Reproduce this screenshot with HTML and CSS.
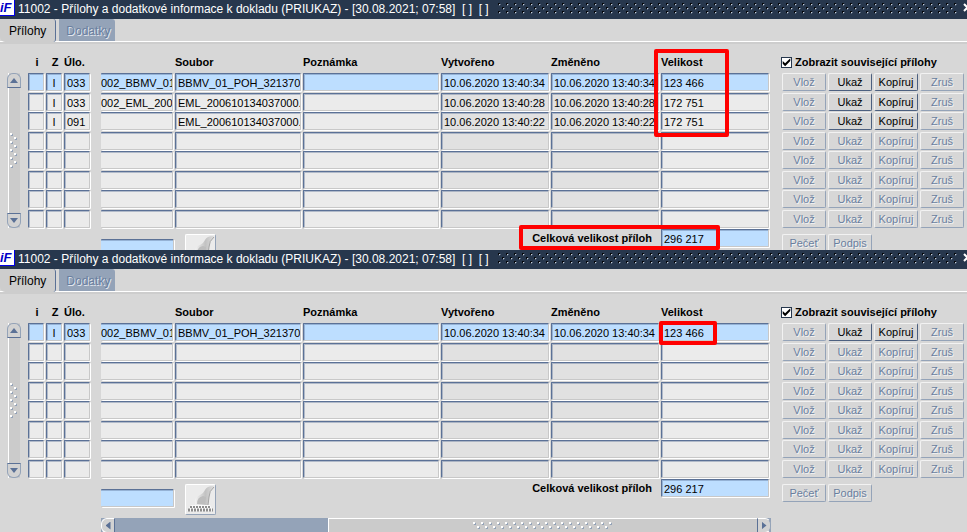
FILE: index.html
```html
<!DOCTYPE html>
<html lang="cs">
<head>
    <meta charset="UTF-8" />
    <meta name="viewport" content="width=device-width, initial-scale=1.0" />
    <title>Přílohy a dodatkové informace k dokladu</title>
    <link rel="stylesheet" href="styles.css">
</head>
<body>
    <!-- Shared patterns and icons -->
    <svg class="defs" aria-hidden="true">
        <defs>
            <pattern id="gripDark" width="8" height="8" patternUnits="userSpaceOnUse">
                <path d="M1 0h2v1h-1v1h-1z M5 4h2v1h-1v1h-1z" fill="#05080d" />
                <path d="M2 1h1v1h-1z M6 5h1v1h-1z" fill="#c3ccd8" />
                <path d="M3 1h1v1h-1z M2 2h1v1h-1z M7 5h1v1h-1z M6 6h1v1h-1z" fill="#5d6b80" />
            </pattern>
            <pattern id="gripLight" width="8" height="8" patternUnits="userSpaceOnUse">
                <path d="M1 1h2v2h-2z M5 5h2v2h-2z" fill="#94a3b8" />
                <path d="M0 0h2v2h-2z M4 4h2v2h-2z" fill="#ffffff" />
            </pattern>
            <linearGradient id="stampShade" x1="0" x2="1" y1="0" y2="0">
                <stop offset="0" stop-color="#f4f4f4" />
                <stop offset="0.55" stop-color="#c2c2c2" />
                <stop offset="1" stop-color="#dedede" />
            </linearGradient>
            <symbol id="stamp" viewBox="0 0 29 29">
                <path d="M9 20q-1-8 5-10 3-1 5-5 2-4 8-4l1 1q-5 4-5 10l-1 8z" fill="url(#stampShade)" />
                <path d="M28 2q-5 4-5 10l-1 8" fill="none" stroke="#a4a4a4" stroke-width="1" />
                <path d="M11 19q0-7 6-8l3 1-1 7z" fill="#bdbdbd" />
                <path d="M5 20h19l3 6H1z" fill="#fafafa" />
                <path d="M2 25h25" stroke="#8c8c8c" stroke-width="3" stroke-dasharray="2 1" />
                <path d="M4 22h21" stroke="#8c8c8c" stroke-width="2" stroke-dasharray="2 1" />
            </symbol>
        </defs>
    </svg>

    <section class="window">
        <header class="titlebar">
            <span class="logo">iF</span>
            <h1>11002 - Přílohy a dodatkové informace k dokladu (PRIUKAZ) - [30.08.2021; 07:58]&nbsp; [ ]&nbsp; [ ]</h1>
            <svg class="grip" aria-hidden="true"><rect width="100%" height="100%" fill="url(#gripDark)" /></svg>
            <button type="button" class="close" aria-label="Zavřít">
                <svg width="10" height="10" viewBox="0 0 10 10"><path d="M1 1l7 7M8 1l-7 7" stroke="#fff" stroke-width="2" /></svg>
            </button>
        </header>
        <nav class="tabs">
            <a href="#" class="tab active">Přílohy</a>
            <a href="#" class="tab">Dodatky</a>
        </nav>
        <div class="content">
            <div class="vscroll">
                <button type="button" class="up" aria-label="Nahoru"></button>
                <svg class="vgrip" aria-hidden="true"><rect width="100%" height="100%" fill="url(#gripLight)" /></svg>
                <button type="button" class="down" aria-label="Dolů"></button>
            </div>
            <div class="data">
                <table class="records">
                    <colgroup>
                        <col class="c-flag"><col class="c-flag"><col class="c-store"><col class="c-gap">
                        <col class="c-path"><col class="c-file"><col><col class="c-date"><col class="c-date">
                        <col class="c-date"><col class="c-space"><col class="c-btn"><col class="c-btn"><col class="c-btn"><col class="c-btn">
                    </colgroup>
                    <thead>
                        <tr>
                            <th class="mid">i</th><th class="mid">Z</th><th>Úlo.</th><th></th><th></th>
                            <th>Soubor</th><th>Poznámka</th><th>Vytvořeno</th><th>Změněno</th><th>Velikost</th><th></th>
                            <th colspan="4"><label class="related"><input type="checkbox" checked>Zobrazit související přílohy</label></th>
                        </tr>
                    </thead>
                    <tbody id="rowsAll"></tbody>
                </table>
                <div class="footer">
                    <input type="text" class="field path" aria-label="Cesta" readonly>
                    <button type="button" class="stamp" aria-label="Razítko"><svg><use href="#stamp" /></svg></button>
                    <label class="total" for="totalAll">Celková velikost příloh</label>
                    <input type="text" class="field sum" id="totalAll" value="296 217" readonly>
                    <div class="actions">
                        <button type="button" class="btn" disabled>Pečeť</button>
                        <button type="button" class="btn" disabled>Podpis</button>
                    </div>
                </div>
            </div>
        </div>
        <div class="mark mark-sizes"></div>
        <div class="mark mark-total"></div>
    </section>

    <section class="window">
        <header class="titlebar">
            <span class="logo">iF</span>
            <h1>11002 - Přílohy a dodatkové informace k dokladu (PRIUKAZ) - [30.08.2021; 07:58]&nbsp; [ ]&nbsp; [ ]</h1>
            <svg class="grip" aria-hidden="true"><rect width="100%" height="100%" fill="url(#gripDark)" /></svg>
            <button type="button" class="close" aria-label="Zavřít">
                <svg width="10" height="10" viewBox="0 0 10 10"><path d="M1 1l7 7M8 1l-7 7" stroke="#fff" stroke-width="2" /></svg>
            </button>
        </header>
        <nav class="tabs">
            <a href="#" class="tab active">Přílohy</a>
            <a href="#" class="tab">Dodatky</a>
        </nav>
        <div class="content">
            <div class="vscroll">
                <button type="button" class="up" aria-label="Nahoru"></button>
                <svg class="vgrip" aria-hidden="true"><rect width="100%" height="100%" fill="url(#gripLight)" /></svg>
                <button type="button" class="down" aria-label="Dolů"></button>
            </div>
            <div class="data">
                <table class="records">
                    <colgroup>
                        <col class="c-flag"><col class="c-flag"><col class="c-store"><col class="c-gap">
                        <col class="c-path"><col class="c-file"><col><col class="c-date"><col class="c-date">
                        <col class="c-date"><col class="c-space"><col class="c-btn"><col class="c-btn"><col class="c-btn"><col class="c-btn">
                    </colgroup>
                    <thead>
                        <tr>
                            <th class="mid">i</th><th class="mid">Z</th><th>Úlo.</th><th></th><th></th>
                            <th>Soubor</th><th>Poznámka</th><th>Vytvořeno</th><th>Změněno</th><th>Velikost</th><th></th>
                            <th colspan="4"><label class="related"><input type="checkbox" checked>Zobrazit související přílohy</label></th>
                        </tr>
                    </thead>
                    <tbody id="rowsOne"></tbody>
                </table>
                <div class="footer">
                    <input type="text" class="field path" aria-label="Cesta" readonly>
                    <button type="button" class="stamp" aria-label="Razítko"><svg><use href="#stamp" /></svg></button>
                    <label class="total" for="totalOne">Celková velikost příloh</label>
                    <input type="text" class="field sum" id="totalOne" value="296 217" readonly>
                    <div class="actions">
                        <button type="button" class="btn" disabled>Pečeť</button>
                        <button type="button" class="btn" disabled>Podpis</button>
                    </div>
                </div>
                <div class="hscroll">
                    <button type="button" class="left" aria-label="Vlevo"></button>
                    <div class="thumb"><svg aria-hidden="true"><rect width="100%" height="100%" fill="url(#gripLight)" /></svg></div>
                    <button type="button" class="right" aria-label="Vpravo"></button>
                </div>
            </div>
        </div>
        <div class="mark mark-one"></div>
    </section>

    <script src="script.js"></script>
</body>
</html>
```

FILE: styles.css
```css
* {
    margin: 0;
    padding: 0;
    box-sizing: border-box;
    font-family: "Liberation Sans", Arial, sans-serif;
}

body {
    height: 100vh;
    display: flex;
    flex-direction: column;
    overflow: hidden;
    background: #d7d7d7;
    color: #000;
    font-size: 11px;
}

.defs {
    position: absolute;
    width: 0;
    height: 0;
}

.window {
    position: relative;
    flex: 1;
    overflow: hidden;
}

/* The upper window is partly covered by the lower one */
.window:first-of-type {
    flex: none;
    max-height: 250px;
}

/* Title bar */
.titlebar {
    display: flex;
    height: 19px;
    background: #27374d;
    color: #fff;
    overflow: hidden;
}

.logo {
    flex: none;
    width: 15px;
    height: 16px;
    background: #fff;
    border: solid #0000e6;
    border-width: 0 1px 1px 0;
    color: #0000c8;
    font-size: 13px;
    line-height: 15px;
    font-weight: bold;
    font-style: italic;
}

.titlebar h1 {
    padding-left: 3px;
    font-size: 12px;
    line-height: 18px;
    font-weight: normal;
    white-space: nowrap;
}

.grip {
    flex: 1;
    min-width: 0;
    height: 11px;
    margin: 3px 6px 0 8px;
}

.close {
    flex: none;
    width: 10px;
    height: 14px;
    margin: 1px -6px 0 0;
    background: none;
    border: none;
}

/* Tabs */
.tabs {
    display: flex;
    height: 25px;
    gap: 3px;
    background: linear-gradient(#d7d7d7 22px, #fff 22px, #fff 23px, #cdcdcd 23px);
}

.tab {
    height: 22px;
    padding: 0 5px 0 7px;
    background: #94a3b8;
    border-radius: 0 3px 0 0;
    color: #6a7f9f;
    font-size: 12px;
    line-height: 25px;
    text-decoration: none;
    text-shadow: 1px 1px 0 #e1e6ee;
}

.tab.active {
    height: 23px;
    padding: 0 9px;
    background: #cdcdcd;
    border-right: 1px solid #5b7196;
    border-radius: 0 3px 3px 5px;
    color: #000;
    text-shadow: none;
}

/* Content */
.content {
    display: flex;
    gap: 7px;
    padding: 0 2px 0 7px;
}

.vscroll {
    display: flex;
    flex-direction: column;
    align-items: center;
    justify-content: space-between;
    flex: none;
    width: 14px;
    height: 155px;
    margin-top: 29px;
    background: linear-gradient(90deg, transparent 1px, #fff 1px, #fff 2px, #cbcbcb 2px, #cbcbcb 13px, transparent 13px);
}

.vscroll button,
.hscroll button {
    display: flex;
    flex: none;
    align-items: center;
    justify-content: center;
    width: 14px;
    height: 15px;
    background: #d2d2d2;
    border: 1px solid #94a3b8;
}

.vscroll .up {
    border-bottom-color: #5b7196;
    border-radius: 6px 6px 0 0;
}

.vscroll .down {
    border-top-color: #5b7196;
    border-radius: 0 0 6px 6px;
}

.vscroll button::before,
.hscroll button::before {
    content: '';
    flex: none;
    width: 8px;
    height: 5px;
    background: #5b7196;
    clip-path: polygon(50% 0, 100% 100%, 0 100%);
}

.vscroll .down::before {
    clip-path: polygon(0 0, 100% 0, 50% 100%);
}

.vgrip {
    width: 8px;
    height: 36px;
}

.data {
    flex: 1;
    min-width: 0;
}

/* Records */
.records {
    width: 100%;
    table-layout: fixed;
    border-collapse: collapse;
}

.c-flag { width: 18px; }
.c-store { width: 28px; }
.c-gap { width: 9px; }
.c-path { width: 74px; }
.c-file { width: 128px; }
.c-date { width: 110px; }
.c-space { width: 10px; }
.c-btn { width: 46px; }

.records th {
    height: 29px;
    padding-top: 7px;
    font-size: 11px;
    text-align: left;
    white-space: nowrap;
    vertical-align: middle;
}

.records th.mid {
    text-align: center;
}

.related {
    display: flex;
    align-items: center;
    gap: 3px;
}

.related input {
    appearance: none;
    width: 11px;
    height: 11px;
    background: #fff;
    border: 1px solid #27374d;
}

.related input:checked::before {
    content: '';
    display: block;
    width: 9px;
    height: 9px;
    background: #000;
    clip-path: polygon(8% 40%, 35% 64%, 92% 8%, 92% 38%, 35% 96%, 8% 70%);
}

.records td {
    height: 19px;
    padding: 0 2px 1px 0;
    vertical-align: top;
}

.records tr:nth-child(odd) td {
    height: 20px;
}

.field {
    display: block;
    width: 100%;
    height: 18px;
    padding: 2px 0 0 2px;
    background: #ebebeb;
    border: 1px solid;
    border-color: #5b7196 #c8c8c8 #c8c8c8 #5b7196;
    border-radius: 1px;
    box-shadow: 1px 1px 0 #fff, inset 1px 1px 0 rgba(91, 113, 150, 0.4);
    color: #000;
    font-size: 11px;
    outline: none;
}

.records .date .field {
    background: #e1e1e1;
}

.records .current .field {
    background: #bddeff;
}

.records .mid .field {
    padding: 2px 0 0;
    text-align: center;
}

/* Column scrolled partly out of view */
.records .path .field,
.field.path {
    padding-left: 0;
    border-left: none;
    box-shadow: 1px 1px 0 #fff, inset 0 1px 0 rgba(91, 113, 150, 0.4);
}

.btn {
    display: block;
    width: 44px;
    height: 18px;
    padding-top: 1px;
    margin-left: 1px;
    background: #d7d7d7;
    border: 1px solid;
    border-color: #f2f2f2 #4c6080 #4c6080 #f2f2f2;
    border-radius: 2px;
    color: #000;
    font-size: 11px;
    line-height: 15px;
    text-align: center;
}

.btn:disabled {
    border-color: #f2f2f2 #94a3b8 #94a3b8 #f2f2f2;
    color: #6a7f9f;
    text-shadow: 1px 1px 0 #f2f2f2;
}

/* Footer */
.footer {
    display: flex;
    align-items: flex-start;
    height: 39px;
    padding-left: 73px;
}

.footer .field {
    background: #bddeff;
}

.field.path {
    width: 73px;
}

.footer .path {
    margin: 10px 11px 0 0;
}

.stamp {
    width: 31px;
    height: 31px;
    margin-top: 5px;
    background: #ebebeb;
    border: 1px solid;
    border-color: #fff #94a3b8 #94a3b8 #fff;
    border-radius: 2px;
}

.stamp svg {
    display: block;
    width: 29px;
    height: 29px;
}

.total {
    margin-left: auto;
    padding-right: 9px;
    font-weight: bold;
    line-height: 18px;
}

.field.sum {
    width: 108px;
}

.actions {
    display: flex;
    gap: 1px;
    width: 184px;
    margin: 5px 0 0 12px;
}

/* Horizontal scrollbar */
.hscroll {
    display: flex;
    height: 15px;
    margin: 0 194px 0 73px;
    background: #94a3b8;
}

.thumb {
    display: flex;
    justify-content: center;
    align-items: center;
    width: 64%;
    margin-left: auto;
    background: #cbcbcb;
    border-top: 1px solid #fff;
    border-left: 1px solid #fff;
}

.thumb svg {
    width: 140px;
    height: 8px;
}

.hscroll .left {
    border-radius: 6px 0 0 6px;
    border-color: #fff #5b7196 #fff #fff;
}

.hscroll .right {
    border-radius: 0 6px 6px 0;
    border-color: #fff #94a3b8 #fff #5b7196;
}

.hscroll button::before {
    width: 5px;
    height: 8px;
    clip-path: polygon(100% 0, 100% 100%, 0 50%);
}

.hscroll .right::before {
    clip-path: polygon(0 0, 100% 50%, 0 100%);
}

/* Red highlights over the values */
.mark {
    position: absolute;
    border: 4px solid #f00;
    border-radius: 2px;
    pointer-events: none;
}

.mark-sizes {
    top: 49px;
    right: 238px;
    width: 75px;
    height: 88px;
}

.mark-total {
    top: 225px;
    right: 247px;
    width: 201px;
    height: 25px;
}

.mark-one {
    top: 71px;
    right: 250px;
    width: 58px;
    height: 24px;
}
```

FILE: script.js
```js
const ROW_COUNT = 8;

const columns = [
    { key: 'i', label: 'i', cls: 'mid' },
    { key: 'z', label: 'Z', cls: 'mid' },
    { key: 'store', label: 'Úlo.', cls: '' },
    null,
    { key: 'path', label: 'Cesta', cls: 'path' },
    { key: 'file', label: 'Soubor', cls: '' },
    { key: 'note', label: 'Poznámka', cls: '' },
    { key: 'created', label: 'Vytvořeno', cls: 'date' },
    { key: 'changed', label: 'Změněno', cls: 'date' },
    { key: 'size', label: 'Velikost', cls: '' },
    null
];

const records = [
    { z: 'I', store: '033', path: '002_BBMV_01', file: 'BBMV_01_POH_3213700', created: '10.06.2020 13:40:34', changed: '10.06.2020 13:40:34', size: '123 466' },
    { z: 'I', store: '033', path: '002_EML_2006', file: 'EML_200610134037000.e', created: '10.06.2020 13:40:28', changed: '10.06.2020 13:40:28', size: '172 751' },
    { z: 'I', store: '091', path: '', file: 'EML_200610134037000.e', created: '10.06.2020 13:40:22', changed: '10.06.2020 13:40:22', size: '172 751' }
];

function buildRows(id, data) {
    let html = '';
    for (let r = 0; r < ROW_COUNT; r++) {
        const rec = data[r];
        html += r === 0 ? '<tr class="current">' : '<tr>';
        columns.forEach(col => {
            if (!col) {
                html += '<td></td>';
                return;
            }
            const value = rec && rec[col.key] ? rec[col.key] : '';
            html += `<td class="${col.cls}"><input type="text" class="field" aria-label="${col.label}" value="${value}" readonly></td>`;
        });
        ['Vlož', 'Ukaž', 'Kopíruj', 'Zruš'].forEach(name => {
            const enabled = rec && (name === 'Ukaž' || name === 'Kopíruj');
            html += `<td><button type="button" class="btn"${enabled ? '' : ' disabled'}>${name}</button></td>`;
        });
        html += '</tr>';
    }
    document.getElementById(id).innerHTML = html;
}

buildRows('rowsAll', records);
buildRows('rowsOne', records.slice(0, 1));
```
